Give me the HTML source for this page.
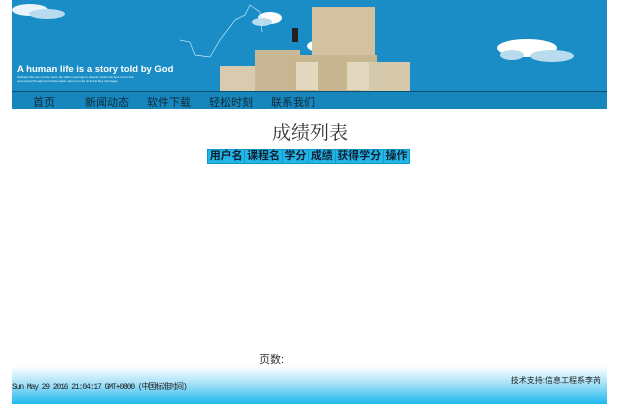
<!DOCTYPE html>
<html><head><meta charset="utf-8"><style>
body{margin:0;width:640px;height:411px;background:#fff;position:relative;overflow:hidden;font-family:"Liberation Sans","Noto Sans CJK SC",sans-serif;}
#banner{position:absolute;left:12px;top:0;width:595px;height:91px;background:#1a8dc6;}
#nav{position:absolute;left:12px;top:91px;width:595px;height:18px;background:#1786bd;border-top:1px solid #0b4d70;box-sizing:border-box;}
#nav span{position:absolute;top:2px;font-size:11px;color:#0d2a3a;}
h1{position:absolute;left:0;width:620px;top:118px;margin:0;text-align:center;font:19px "Liberation Serif","Noto Serif CJK SC",serif;color:#333;}
table{position:absolute;left:207px;top:149px;border-collapse:collapse;background:#22b5e8;}
td{font-size:11px;font-weight:bold;color:#102030;padding:0 1.7px;border:1px solid #1198c9;height:13px;line-height:13px;}
#pg{position:absolute;left:259px;top:351px;font-size:11px;color:#333;}
#foot{position:absolute;left:12px;top:366px;width:595px;height:38px;background:linear-gradient(#fff,#a9e2f8 45%,#1fb8ee);}
#foot .l{position:absolute;left:0;top:15px;font:8px "Liberation Mono","Noto Sans CJK SC",monospace;letter-spacing:-1.1px;color:#222;}
#foot .r{position:absolute;right:6px;top:9px;font-size:8px;color:#222;}
</style></head><body>
<div id="banner">
<svg width="595" height="91">
<g fill="#fff"><ellipse cx="18" cy="10" rx="18" ry="6" opacity=".9"/><ellipse cx="35" cy="14" rx="18" ry="5" fill="#b9dbee"/>
<ellipse cx="258" cy="18" rx="12" ry="6"/><ellipse cx="250" cy="22" rx="10" ry="4" fill="#b9dbee"/><ellipse cx="308" cy="46" rx="13" ry="6"/>
<ellipse cx="515" cy="48" rx="30" ry="9"/><ellipse cx="540" cy="56" rx="22" ry="6" fill="#b9dbee"/><ellipse cx="500" cy="55" rx="12" ry="5" fill="#b9dbee"/></g>
<polyline points="168,40 178,42 183,55 198,57 208,40 223,20 233,15 238,5 248,12 250,32" fill="none" stroke="#bfe8ff" stroke-width=".7"/>
<g><rect x="208" y="66" width="55" height="25" fill="#d8cbb0"/><rect x="243" y="50" width="45" height="41" fill="#c9b896"/>
<rect x="300" y="7" width="63" height="84" fill="#d2c2a2"/><rect x="275" y="55" width="90" height="36" fill="#c8b690"/>
<rect x="348" y="62" width="50" height="29" fill="#d6c8aa"/>
<rect x="284" y="62" width="22" height="28" fill="#e2d7bf"/><rect x="335" y="62" width="22" height="28" fill="#e2d7bf"/></g>
<rect x="280" y="28" width="6" height="14" fill="#222"/>
<text x="5" y="72" font-family="Liberation Sans" font-weight="bold" font-size="9.5" fill="#fff">A human life is a story told by God</text>
<text x="5" y="78" font-size="3" fill="#fff">Perhaps they are not the stars, but rather openings in Heaven where the love of our lost</text>
<text x="5" y="82" font-size="3" fill="#fff">ones pours through and shines down upon us to let us know they are happy.</text>
</svg></div>
<div id="nav"><span style="left:21px">首页</span><span style="left:73px">新闻动态</span><span style="left:135px">软件下载</span><span style="left:197px">轻松时刻</span><span style="left:259px">联系我们</span></div>
<h1>成绩列表</h1>
<table><tr><td>用户名</td><td>课程名</td><td>学分</td><td>成绩</td><td>获得学分</td><td>操作</td></tr></table>
<div id="pg">页数:</div>
<div id="foot"><div class="l">Sun May 29 2016 21:04:17 GMT+0800 (中国标准时间)</div><div class="r">技术支持:信息工程系李芮</div></div>
</body></html>
